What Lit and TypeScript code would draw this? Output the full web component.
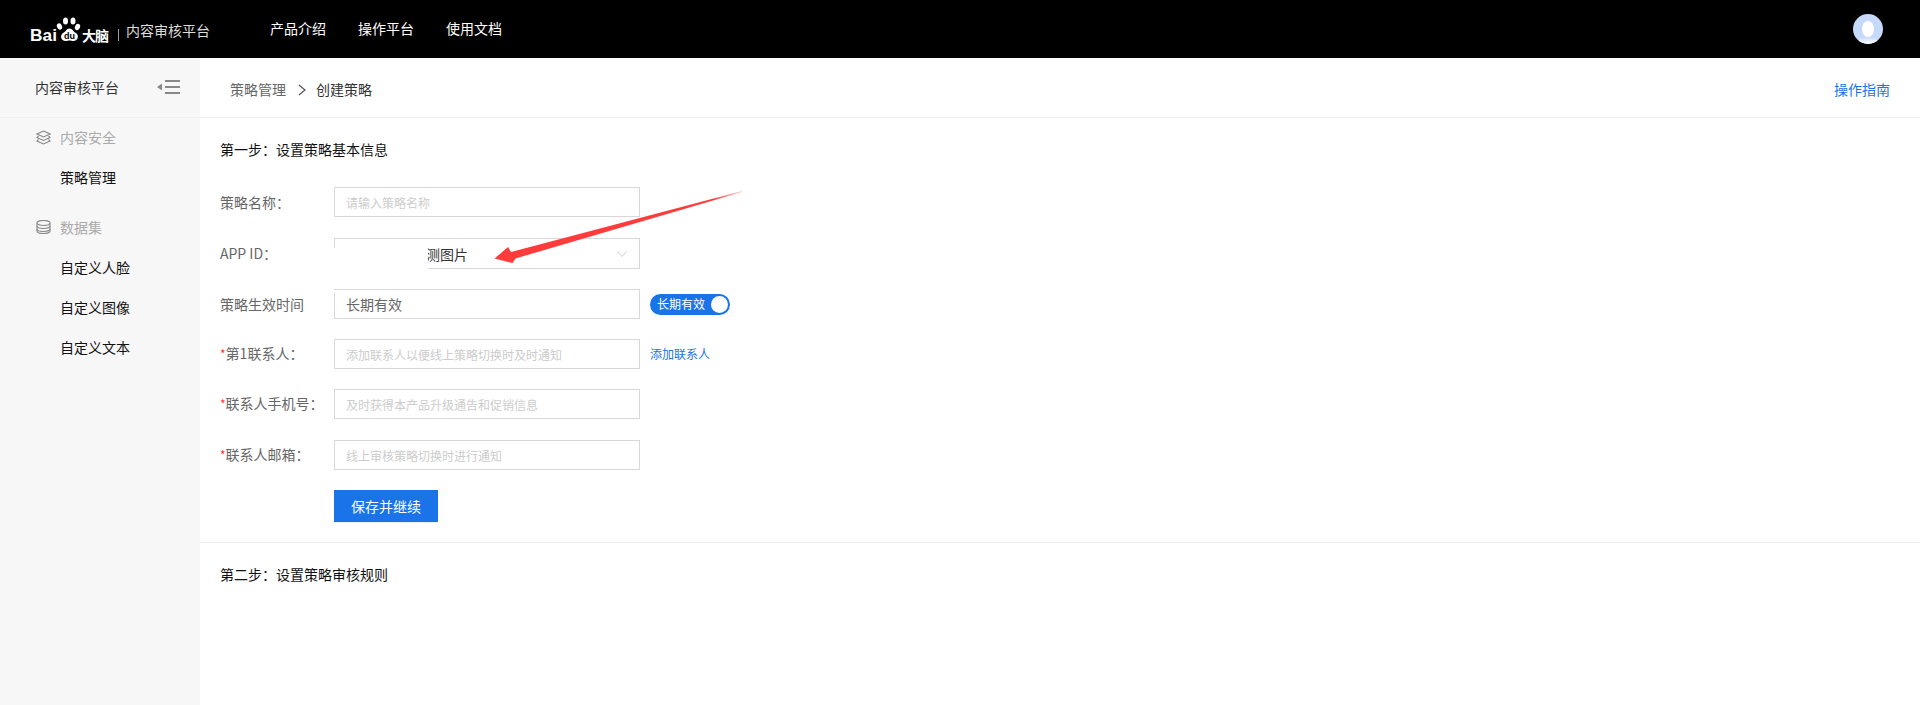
import { LitElement, html, css, svg } from "lit";
import { customElement } from "lit/decorators.js";

const overlay = svg`
  <defs>
    <linearGradient id="fade" gradientUnits="userSpaceOnUse" x1="500" y1="258" x2="742" y2="192">
      <stop offset="0" stop-color="#ff3b3b"/>
      <stop offset="0.88" stop-color="#ff3b3b"/>
      <stop offset="1" stop-color="#ff3b3b" stop-opacity="0.25"/>
    </linearGradient>
  </defs>
  <rect x="333" y="248" width="95" height="41" fill="#fff"/>
  <rect x="333" y="290" width="3" height="3" fill="#fff"/>
  <polygon points="494.5,258.5 508,247 511,252 742,191 742,192 515.5,258.5 512.5,263" fill="url(#fade)"/>
`;

@customElement("app-root")
export class AppRoot extends LitElement {
  static styles = css`
    :host {
      display: block;
      position: relative;
      height: 705px;
      overflow: hidden;
      background: #fff;
      font-family: "Noto Sans CJK SC", "Noto Sans", sans-serif;
      font-size: 14px;
      line-height: 20px;
      color: #222;
    }
    .top {
      height: 58px;
      background: #000;
      display: flex;
      align-items: center;
      color: #fff;
    }
    .logo {
      display: flex;
      align-items: center;
      padding-left: 30px;
      width: 270px;
      flex: none;
      box-sizing: border-box;
      height: 100%;
    }
    .logo svg { display: block; }
    .logo-name { margin: 1px 0 0 6px; color: #ddd; white-space: nowrap; }
    .nav { display: flex; gap: 32px; margin-top: -3px; }
    .nav a { color: #fff; }
    .spacer { flex: 1; }
    .avatar { display: block; margin-right: 37px; }
    .body { display: flex; height: 647px; }
    .side { width: 200px; background: #f7f7f7; flex: none; }
    .side-title {
      height: 59px;
      border-bottom: 1px solid #eee;
      display: flex;
      align-items: center;
      justify-content: space-between;
      padding: 0 20px 0 35px;
      color: #333;
    }
    .side-title span { margin-top: -2px; }
    .side-title svg { margin-top: -2px; }
    .group { margin-bottom: 10px; }
    .group-head {
      height: 38px;
      padding-bottom: 2px;
      display: flex;
      align-items: center;
      padding-left: 36px;
      color: #aaa;
    }
    .group-head svg { width: 15px; margin-right: 9px; flex: none; }
    .item { height: 38px; padding-bottom: 2px; display: flex; align-items: center; padding-left: 60px; color: #111; }
    .main { flex: 1; min-width: 0; }
    .crumbs {
      border-bottom: 1px solid #eee;
      display: flex;
      align-items: center;
      padding: 4px 30px 0 30px;
      height: 55px;
      color: #666;
    }
    .crumbs span, .crumbs a { margin-top: -1px; }
    .crumbs svg { margin: 0 10px 0 12px; }
    .crumbs .current { color: #333; }
    .crumbs a { margin-left: auto; color: #1a73e8; }
    .step { padding: 21px 20px 20px; }
    .step + .step { border-top: 1px solid #eee; }
    .step h2 { margin: 0; font: inherit; color: #111; height: 20px; }
    .form { margin-top: 28px; display: flex; flex-direction: column; }
    .row { display: flex; align-items: center; height: 30px; margin-bottom: 20px; color: #666; }
    .row.wide { margin-bottom: 21px; }
    .row.tall { height: 31px; }
    .label { width: 114px; flex: none; margin-top: -1px; }
    .req { color: #f33; font-size: 12px; }
    .field {
      width: 306px;
      height: 100%;
      box-sizing: border-box;
      border: 1px solid #d8d8d8;
      padding: 0 11px;
      font: inherit;
      color: #666;
      outline: none;
      background: #fff;
      border-radius: 0;
      display: flex;
      align-items: center;
      flex: none;
    }
    input.field { font-size: 12px; }
    input.field.value { font-size: 14px; }
    input.field::placeholder { color: #ccc; opacity: 1; }
    .select { justify-content: space-between; padding: 0 12px 0 91px; color: #333; }
    .toggle {
      margin-left: 10px;
      width: 80px;
      height: 21px;
      border-radius: 11px;
      background: #1a73e8;
      color: #fff;
      font-size: 12px;
      display: flex;
      align-items: center;
      justify-content: space-between;
      box-sizing: border-box;
      padding: 0 2px 0 7px;
    }
    .knob { width: 17px; height: 17px; border-radius: 50%; background: #fff; }
    .link { margin-left: 10px; color: #1a73e8; font-size: 12px; }
    .save {
      display: block;
      margin: 0 0 0 114px;
      width: 104px;
      height: 32px;
      border: 0;
      padding: 0;
      background: #1a73e8;
      color: #fff;
      font: inherit;
      box-shadow: 0 1px 0 #eee;
    }
    .overlay { position: absolute; left: 0; top: 0; pointer-events: none; }
  `;

  render() {
    return html`
      <div class="top">
        <div class="logo">
          <svg width="90" height="30" viewBox="30 12 90 30" aria-label="Baidu 大脑">
            <text x="30" y="39" fill="#fff" font-family="Liberation Sans" font-weight="700" font-size="17" textLength="27" lengthAdjust="spacingAndGlyphs">Bai</text>
            <ellipse cx="59.5" cy="24.5" rx="2.5" ry="3.2" fill="#fff" transform="rotate(-25 59.5 24.5)"/>
            <ellipse cx="65.5" cy="19" rx="2.5" ry="3.5" fill="#fff"/>
            <ellipse cx="73" cy="19" rx="2.5" ry="3.5" fill="#fff"/>
            <ellipse cx="77.5" cy="25" rx="2.5" ry="3.2" fill="#fff" transform="rotate(25 77.5 25)"/>
            <path d="M69.5 26.5c3 0 3.5 3 6.5 4.5 3 2 2.500 7.500-2 8-1.800.2-3-.6-4.500-.6s-2.800.9-4.500.6c-4.500-.6-5-6-2-8 3-1.500 3.500-4.500 6.500-4.500z" fill="#fff"/>
            <text x="69.500" y="37" text-anchor="middle" fill="#000" font-family="Liberation Sans" font-weight="700" font-size="9">du</text>
            <text x="82" y="39" fill="#fff" font-family="Noto Sans CJK SC" font-weight="700" font-size="14" textLength="27">大脑</text>
            <rect x="118" y="27" width="1" height="12" fill="#999"/>
          </svg>
          <span class="logo-name">内容审核平台</span>
        </div>
        <div class="nav"><a>产品介绍</a><a>操作平台</a><a>使用文档</a></div>
        <div class="spacer"></div>
        <svg class="avatar" width="30" height="30" viewBox="0 0 30 30">
          <defs>
            <clipPath id="av"><circle cx="15" cy="15" r="15"/></clipPath>
            <linearGradient id="sh" x1="0" y1="0" x2="0" y2="1">
              <stop offset="0" stop-color="#c6d9fb"/><stop offset="1" stop-color="#fff"/>
            </linearGradient>
          </defs>
          <g clip-path="url(#av)">
            <rect width="30" height="30" fill="#c6d9fb"/>
            <path d="M4 30c1-6 6-7 11-7s10 1 11 7z" fill="url(#sh)"/>
            <ellipse cx="15" cy="15" rx="6" ry="8" fill="#fff"/>
          </g>
        </svg>
      </div>
      <div class="body">
        <aside class="side">
          <div class="side-title">
            <span>内容审核平台</span>
            <svg width="23" height="14" viewBox="0 0 23 14">
              <path d="M0 7l5-3.500v7z" fill="#888"/>
              <path d="M8 1h15M8 7h15M8 13h15" stroke="#888" stroke-width="2" fill="none"/>
            </svg>
          </div>
          <div class="group">
            <div class="group-head">
              <svg height="15" viewBox="0 0 15 15" fill="none" stroke="#888" stroke-width="1.100">
                <path d="M7.500 1L14 4 7.500 7 1 4z"/>
                <path d="M2.500 6L1 7.500l6.500 3 6.500-3L12.500 6"/>
                <path d="M2.500 9.500L1 11l6.500 3 6.500-3-1.500-1.500"/>
              </svg>
              内容安全
            </div>
            <div class="item">策略管理</div>
          </div>
          <div class="group">
            <div class="group-head">
              <svg height="14" viewBox="0 0 15 14" fill="none" stroke="#888" stroke-width="1.100">
                <ellipse cx="7.500" cy="3" rx="6.500" ry="2.500"/>
                <path d="M1 3v8c0 1.400 2.900 2.500 6.500 2.500S14 12.400 14 11V3"/>
                <path d="M1 6c0 1.400 2.900 2.500 6.500 2.500S14 7.400 14 6"/>
                <path d="M1 9c0 1.400 2.900 2.500 6.500 2.500S14 10.400 14 9"/>
              </svg>
              数据集
            </div>
            <div class="item">自定义人脸</div>
            <div class="item">自定义图像</div>
            <div class="item">自定义文本</div>
          </div>
        </aside>
        <main class="main">
          <div class="crumbs">
            <span>策略管理</span>
            <svg width="8" height="12" viewBox="0 0 8 12" fill="none" stroke="#555" stroke-width="1.200"><path d="M1 1l6 5-6 5"/></svg>
            <span class="current">创建策略</span>
            <a>操作指南</a>
          </div>
          <section class="step">
            <h2>第一步：设置策略基本信息</h2>
            <div class="form">
              <div class="row wide"><span class="label">策略名称：</span><input class="field" placeholder="请输入策略名称" /></div>
              <div class="row tall"><span class="label">APP ID：</span>
                <div class="field select"><span>测图片</span>
                  <svg width="10" height="6" viewBox="0 0 10 6" fill="none" stroke="#ccc"><path d="M.5.500L5 5.500 9.500.500"/></svg>
                </div>
              </div>
              <div class="row"><span class="label">策略生效时间</span><input class="field value" .value=${"长期有效"} />
                <div class="toggle"><span>长期有效</span><span class="knob"></span></div>
              </div>
              <div class="row"><span class="label"><span class="req">*</span>第1联系人：</span><input class="field" placeholder="添加联系人以便线上策略切换时及时通知" /><a class="link">添加联系人</a></div>
              <div class="row wide"><span class="label"><span class="req">*</span>联系人手机号：</span><input class="field" placeholder="及时获得本产品升级通告和促销信息" /></div>
              <div class="row"><span class="label"><span class="req">*</span>联系人邮箱：</span><input class="field" placeholder="线上审核策略切换时进行通知" /></div>
            </div>
            <button class="save">保存并继续</button>
          </section>
          <section class="step">
            <h2>第二步：设置策略审核规则</h2>
          </section>
        </main>
      </div>
      <svg class="overlay" width="1920" height="705" viewBox="0 0 1920 705">${overlay}</svg>
    `;
  }
}
